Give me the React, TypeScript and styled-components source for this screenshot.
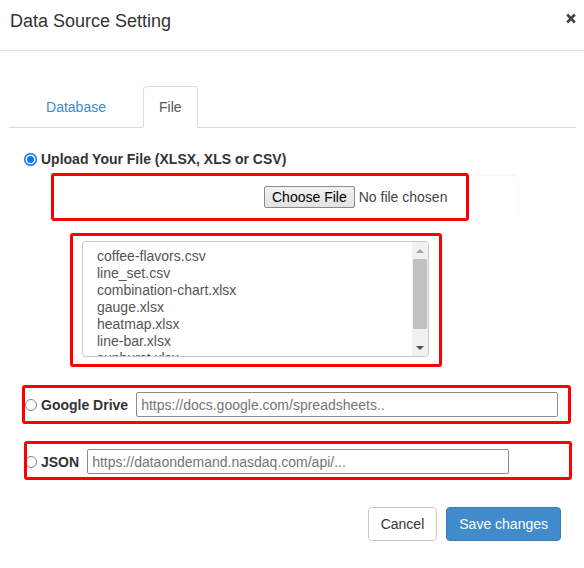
import React from "react";
import styled, { createGlobalStyle, css } from "styled-components";

const GlobalStyle = createGlobalStyle`
  html, body { margin: 0; padding: 0; background: #fff; }
  body {
    font-family: "Liberation Sans", Arial, Helvetica, sans-serif;
    font-size: 14px;
    color: #333;
  }
  *, *::before, *::after { box-sizing: border-box; }
`;

const Dialog = styled.div`
  width: 584px;
  height: 568px;
  background: #fff;
`;

const Header = styled.div`
  display: flex;
  align-items: flex-start;
  justify-content: space-between;
  height: 51px;
  padding: 8px 8px 0 10px;
  border-bottom: 1px solid #e5e5e5;
`;

const Title = styled.h4`
  margin: 0;
  font-size: 18px;
  font-weight: normal;
  line-height: 26px;
  color: #333;
`;

const CloseButton = styled.button`
  margin-top: 5px;
  padding: 0;
  border: 0;
  background: none;
  line-height: 0;
  cursor: pointer;
`;

const Body = styled.div`
  padding: 35px 8px 0 9px;
`;

const TabList = styled.ul`
  display: flex;
  margin: 0;
  padding: 0;
  list-style: none;
  border-bottom: 1px solid #ddd;
`;

const TabItem = styled.li`
  margin-bottom: -1px;
`;

const TabLink = styled.a<{ $active?: boolean; $width?: number }>`
  display: block;
  padding: 10px 15px;
  line-height: 20px;
  font-size: 14px;
  border: 1px solid transparent;
  border-radius: 4px 4px 0 0;
  color: #428bca;
  text-decoration: none;
  cursor: pointer;
  ${(p) =>
    p.$width &&
    css`
      width: ${p.$width}px;
      padding-left: 0;
      padding-right: 0;
      text-align: center;
    `}
  ${(p) =>
    p.$active &&
    css`
      color: #555;
      background: #fff;
      border-color: #ddd #ddd transparent;
    `}
`;

const OptionRow = styled.label`
  display: flex;
  align-items: center;
  gap: 4px;
  height: 20px;
  margin: 21px 0 0 15px;
`;

const Radio = styled.span<{ $checked?: boolean; $size: number }>`
  display: inline-block;
  flex: none;
  width: ${(p) => p.$size}px;
  height: ${(p) => p.$size}px;
  border-radius: 50%;
  ${(p) =>
    p.$checked
      ? css`
          background: #0b74f5;
          box-shadow: inset 0 0 0 1.5px #0b74f5, inset 0 0 0 3px #fff;
        `
      : css`
          background: #fff;
          border: 1px solid #858585;
        `}
`;

const OptionLabel = styled.span`
  font-size: 14px;
  font-weight: bold;
  line-height: 20px;
  color: #333;
  white-space: nowrap;
`;

const Mark = styled.div<{ $left: number; $top: number; $width: number; $height: number }>`
  position: absolute;
  left: ${(p) => p.$left}px;
  top: ${(p) => p.$top}px;
  width: ${(p) => p.$width}px;
  height: ${(p) => p.$height}px;
  border: 3px solid #ff0000;
  border-radius: 3px;
  pointer-events: none;
`;

const FileField = styled.div`
  position: relative;
  display: flex;
  align-items: center;
  width: 467px;
  height: 43px;
  margin: 6px 0 0 43px;
  padding-left: 211px;
  border: 1px solid #f5f5f5;
  border-bottom-color: transparent;
  border-radius: 4px;
`;

const ChooseButton = styled.span`
  display: inline-block;
  height: 22px;
  padding: 0 7px;
  border: 1px solid #8a8a8a;
  border-radius: 2px;
  background: linear-gradient(#f2f2f2, #e3e3e3);
  color: #000;
  font-size: 14px;
  line-height: 20px;
  white-space: nowrap;
`;

const FileStatus = styled.span`
  margin-left: 4px;
  color: #444;
  font-size: 14px;
  white-space: nowrap;
`;

const ListSection = styled.div`
  position: relative;
  width: 347px;
  height: 116px;
  margin: 23px 0 0 73px;
`;

const ListBox = styled.div`
  display: flex;
  height: 100%;
  border: 1px solid #c8c8c8;
  border-radius: 4px;
  overflow: hidden;
`;

const Items = styled.ul`
  flex: 1;
  margin: 0;
  padding: 6px 0 0 14px;
  list-style: none;
  overflow: hidden;
`;

const Item = styled.li`
  font-size: 14px;
  line-height: 17px;
  color: #555;
  white-space: nowrap;
`;

const ScrollTrack = styled.div`
  display: flex;
  flex-direction: column;
  width: 16px;
  background: #f1f1f1;
`;

const ScrollArrow = styled.div<{ $dir: "up" | "down"; $color: string }>`
  display: flex;
  align-items: center;
  justify-content: center;
  height: 17px;
  flex: none;
  &::before {
    content: "";
    width: 0;
    height: 0;
    border-left: 4px solid transparent;
    border-right: 4px solid transparent;
    ${(p) =>
      p.$dir === "up"
        ? css`border-bottom: 4px solid ${p.$color};`
        : css`border-top: 4px solid ${p.$color};`}
  }
`;

const ScrollThumb = styled.div`
  height: 70px;
  margin: 0 1px;
  background: #c1c1c1;
`;

const ScrollSpacer = styled.div`
  flex: 1;
`;

const SourceRow = styled.div<{ $mt: number }>`
  position: relative;
  display: flex;
  align-items: center;
  gap: 4px;
  height: 25px;
  margin-top: ${(p) => p.$mt}px;
  padding-left: 16px;
`;

const UrlInput = styled.input<{ $width: number }>`
  width: ${(p) => p.$width}px;
  height: 25px;
  margin-left: 4px;
  padding: 0 4px;
  border: 1px solid #8c8c8c;
  border-radius: 2px;
  font-family: "Liberation Sans", Arial, sans-serif;
  font-size: 14px;
  color: #333;
  outline: none;
  &::placeholder {
    color: #757575;
  }
`;

const Footer = styled.div`
  display: flex;
  justify-content: flex-end;
  gap: 9px;
  padding: 33px 15px 0 0;
`;

const Button = styled.button<{ $primary?: boolean }>`
  height: 34px;
  padding: 6px 12px;
  border: 1px solid #ccc;
  border-radius: 4px;
  background: #fff;
  color: #333;
  font-family: "Liberation Sans", Arial, sans-serif;
  font-size: 14px;
  line-height: 20px;
  cursor: pointer;
  ${(p) =>
    p.$primary &&
    css`
      background: #428bca;
      border-color: #357ebd;
      color: #fff;
    `}
`;

const files = [
  "coffee-flavors.csv",
  "line_set.csv",
  "combination-chart.xlsx",
  "gauge.xlsx",
  "heatmap.xlsx",
  "line-bar.xlsx",
  "sunburst.xlsx",
];

export default function App() {
  return (
    <>
      <GlobalStyle />
      <Dialog>
        <Header>
          <Title>Data Source Setting</Title>
          <CloseButton aria-label="Close">
            <svg width="10" height="11" viewBox="0 0 10 11">
              <path d="M1.2 1.5 L8.8 9.5 M8.8 1.5 L1.2 9.5" stroke="#444" strokeWidth="2.6" strokeLinecap="butt" />
            </svg>
          </CloseButton>
        </Header>
        <Body>
          <TabList>
            <TabItem>
              <TabLink $width={134}>Database</TabLink>
            </TabItem>
            <TabItem>
              <TabLink $active>File</TabLink>
            </TabItem>
          </TabList>

          <OptionRow>
            <Radio $checked $size={13} />
            <OptionLabel>Upload Your File (XLSX, XLS or CSV)</OptionLabel>
          </OptionRow>

          <FileField>
            <ChooseButton>Choose File</ChooseButton>
            <FileStatus>No file chosen</FileStatus>
            <Mark $left={-2} $top={-3} $width={418} $height={48} />
          </FileField>

          <ListSection>
            <ListBox>
              <Items>
                {files.map((f) => (
                  <Item key={f}>{f}</Item>
                ))}
              </Items>
              <ScrollTrack>
                <ScrollArrow $dir="up" $color="#a3a3a3" />
                <ScrollThumb />
                <ScrollSpacer />
                <ScrollArrow $dir="down" $color="#505050" />
              </ScrollTrack>
            </ListBox>
            <Mark $left={-12} $top={-8} $width={372} $height={134} />
          </ListSection>

          <SourceRow $mt={35}>
            <Radio $size={12} />
            <OptionLabel>Google Drive</OptionLabel>
            <UrlInput $width={422} placeholder="https://docs.google.com/spreadsheets.." />
            <Mark $left={13} $top={-7} $width={549} $height={39} />
          </SourceRow>

          <SourceRow $mt={32}>
            <Radio $size={12} />
            <OptionLabel>JSON</OptionLabel>
            <UrlInput $width={422} placeholder="https://dataondemand.nasdaq.com/api/..." />
            <Mark $left={15} $top={-8} $width={548} $height={39} />
          </SourceRow>

          <Footer>
            <Button>Cancel</Button>
            <Button $primary>Save changes</Button>
          </Footer>
        </Body>
      </Dialog>
    </>
  );
}
